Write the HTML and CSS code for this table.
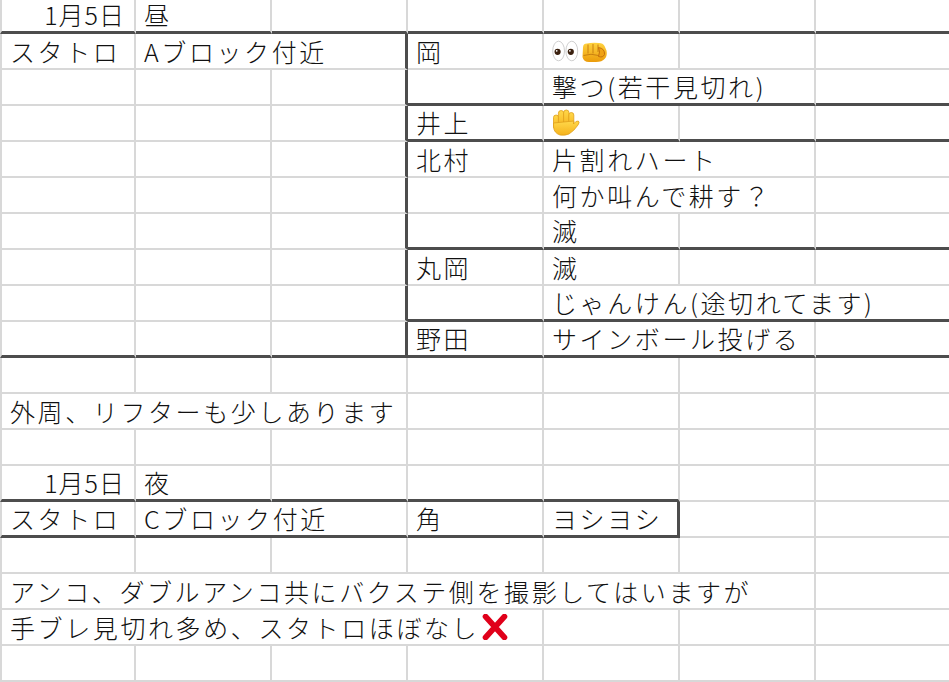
FILE: index.html
```html
<!DOCTYPE html>
<html lang="ja">
<head>
<meta charset="utf-8">
<title>Sheet</title>
<link rel="stylesheet" href="styles.css">
</head>
<body>
<div class="sheet">
  <div class="row first">
    <div class="c tb r">1月5日</div><div class="c tb">昼</div><div class="c tb"></div><div class="c tb"></div><div class="c tb"></div><div class="c tb"></div><div class="c tb"></div>
  </div>
  <div class="row">
    <div class="c">スタトロ</div><div class="c s2 tr">Aブロック付近</div><div class="c">岡</div>
    <div class="c"><span class="emo">
      <svg class="eyes" width="27" height="22" viewBox="0 0 27 22"><ellipse cx="6.6" cy="11" rx="5.9" ry="9.8" fill="#fff" stroke="#c9c9c9" stroke-width="0.9"/><ellipse cx="19.8" cy="11" rx="5.9" ry="9.8" fill="#fff" stroke="#c9c9c9" stroke-width="0.9"/><circle cx="5.6" cy="11.8" r="3.1" fill="#3b210f"/><circle cx="18.8" cy="11.8" r="3.1" fill="#3b210f"/><circle cx="4.7" cy="10.8" r="0.9" fill="#fff"/><circle cx="17.9" cy="10.8" r="0.9" fill="#fff"/></svg>
      <svg class="fist" width="29" height="22" viewBox="0 0 29 22"><defs><linearGradient id="fg" x1="0" y1="0" x2="0" y2="1"><stop offset="0" stop-color="#ffd23f"/><stop offset="1" stop-color="#eb9c0b"/></linearGradient></defs><path d="M4 6.5 Q4 2.5 8 2.5 Q12 1.5 20 2 Q24 2 25.5 5 L27.5 9.5 Q28.5 14.5 26 17.5 Q23 21 17 21 L10 21 Q4.5 21 3.5 16 Z" fill="url(#fg)"/><path d="M9 3.5 L9 12.5 M14 3 L14 12.5 M19 3.5 L19 11" stroke="#c98010" stroke-width="1" fill="none"/><path d="M4.5 14.5 Q12 12 19.5 14.5" stroke="#c98010" stroke-width="1" fill="none"/><path d="M19.5 6.5 Q26 7.5 25.5 13.5 Q24 17 19.5 15.5 Q21.5 11 19.5 6.5 Z" fill="#f0a214" stroke="#bf6a0a" stroke-width="0.9"/></svg>
    </span></div>
    <div class="c"></div><div class="c"></div>
  </div>
  <div class="row">
    <div class="c"></div><div class="c"></div><div class="c tr"></div><div class="c tb"></div><div class="c s2 tb">撃つ(若干見切れ)</div><div class="c tb"></div>
  </div>
  <div class="row">
    <div class="c"></div><div class="c"></div><div class="c tr"></div><div class="c tb">井上</div>
    <div class="c tb"><span class="emo">
      <svg class="hand" width="30" height="27" viewBox="0 0 30 27"><defs><linearGradient id="hg" x1="0" y1="0" x2="0" y2="1"><stop offset="0" stop-color="#ffd84a"/><stop offset="1" stop-color="#f5b21c"/></linearGradient></defs><g fill="url(#hg)" stroke="#e0a01a" stroke-width="0.8"><rect x="2.5" y="6" width="5.2" height="14" rx="2.6"/><rect x="7.4" y="1.5" width="5.4" height="17" rx="2.7"/><rect x="12.6" y="1" width="5.4" height="17" rx="2.7"/><rect x="17.8" y="3.5" width="5" height="15" rx="2.5"/><path d="M2.5 14 L22.8 12 L22.5 15 Q25 11.5 27.3 12 Q29 13 27 16 Q23 22 18 25 Q14 26.8 9 26 Q3 24 2.6 18 Z"/></g></svg>
    </span></div>
    <div class="c tb"></div><div class="c tb"></div>
  </div>
  <div class="row">
    <div class="c"></div><div class="c"></div><div class="c tr"></div><div class="c">北村</div><div class="c s2">片割れハート</div><div class="c"></div>
  </div>
  <div class="row">
    <div class="c"></div><div class="c"></div><div class="c tr"></div><div class="c"></div><div class="c s2">何か叫んで耕す？</div><div class="c"></div>
  </div>
  <div class="row">
    <div class="c"></div><div class="c"></div><div class="c tr"></div><div class="c tb"></div><div class="c tb">滅</div><div class="c tb"></div><div class="c tb"></div>
  </div>
  <div class="row">
    <div class="c"></div><div class="c"></div><div class="c tr"></div><div class="c">丸岡</div><div class="c">滅</div><div class="c"></div><div class="c"></div>
  </div>
  <div class="row">
    <div class="c"></div><div class="c"></div><div class="c tr"></div><div class="c tb"></div><div class="c s3 tb">じゃんけん(途切れてます)</div>
  </div>
  <div class="row">
    <div class="c tb"></div><div class="c tb"></div><div class="c tb tr"></div><div class="c tb">野田</div><div class="c s2 tb">サインボール投げる</div><div class="c tb"></div>
  </div>
  <div class="row">
    <div class="c"></div><div class="c"></div><div class="c"></div><div class="c"></div><div class="c"></div><div class="c"></div><div class="c"></div>
  </div>
  <div class="row">
    <div class="c s3">外周、リフターも少しあります</div><div class="c"></div><div class="c"></div><div class="c"></div><div class="c"></div>
  </div>
  <div class="row">
    <div class="c"></div><div class="c"></div><div class="c"></div><div class="c"></div><div class="c"></div><div class="c"></div><div class="c"></div>
  </div>
  <div class="row">
    <div class="c tb r">1月5日</div><div class="c tb">夜</div><div class="c tb"></div><div class="c tb"></div><div class="c tb"></div><div class="c"></div><div class="c"></div>
  </div>
  <div class="row">
    <div class="c tb">スタトロ</div><div class="c s2 tb">Cブロック付近</div><div class="c tb">角</div><div class="c tb tr">ヨシヨシ</div><div class="c"></div><div class="c"></div>
  </div>
  <div class="row">
    <div class="c"></div><div class="c"></div><div class="c"></div><div class="c"></div><div class="c"></div><div class="c"></div><div class="c"></div>
  </div>
  <div class="row">
    <div class="c s6">アンコ、ダブルアンコ共にバクステ側を撮影してはいますが</div><div class="c"></div>
  </div>
  <div class="row">
    <div class="c s4"><span class="txt">手ブレ見切れ多め、スタトロほぼなし</span><svg class="cross" width="28" height="26" viewBox="0 0 28 26"><path d="M4.5 2.5 L23.5 23.5 M23.5 2.5 L4.5 23.5" stroke="#e0001a" stroke-width="5.6" stroke-linecap="round" fill="none"/></svg></div>
    <div class="c"></div><div class="c"></div><div class="c"></div>
  </div>
  <div class="row">
    <div class="c"></div><div class="c"></div><div class="c"></div><div class="c"></div><div class="c"></div><div class="c"></div><div class="c"></div>
  </div>
</div>
</body>
</html>
```
FILE: styles.css
```css
html, body {
  margin: 0;
  padding: 0;
  background: #ffffff;
}
body {
  width: 949px;
  height: 682px;
  overflow: hidden;
  font-family: "Noto Sans CJK JP", "Noto Sans", sans-serif;
  color: #111111;
}
.sheet {
  width: 952px;
  margin-left: 1px;
}
.row {
  display: grid;
  grid-template-columns: 135px repeat(6, 136px);
  height: 36px;
}
.row.first {
  height: 34px;
}
.c {
  box-sizing: border-box;
  height: 36px;
  border-right: 2px solid #d8d8d8;
  border-bottom: 2px solid #d8d8d8;
  padding: 0 8px;
  font-size: 25px;
  font-weight: 300;
  letter-spacing: 2.6px;
  line-height: 34px;
  white-space: nowrap;
  overflow: visible;
}
.row > .c:first-child {
  border-left: 2px solid #d8d8d8;
  margin-left: -1px;
  padding-left: 8px;
}
.row.first > .c {
  height: 34px;
  line-height: 29px;
}
.s2 { grid-column: span 2; }
.s3 { grid-column: span 3; }
.s4 { grid-column: span 4; }
.s6 { grid-column: span 6; }
.tb { border-bottom: 3px solid #4d4d4d; line-height: 33px; }
.tr { border-right: 3px solid #4d4d4d; }
.r {
  text-align: right;
  letter-spacing: 1px;
  padding-right: 9px;
}
.emo {
  display: flex;
  align-items: center;
  height: 100%;
}
.eyes { display: block; margin-top: -1px; }
.fist { display: block; margin-top: 2px; }
.hand { display: block; margin-left: -1px; }
.s4 {
  display: flex;
  align-items: center;
}
.cross { display: block; margin-left: 2px; }
```
